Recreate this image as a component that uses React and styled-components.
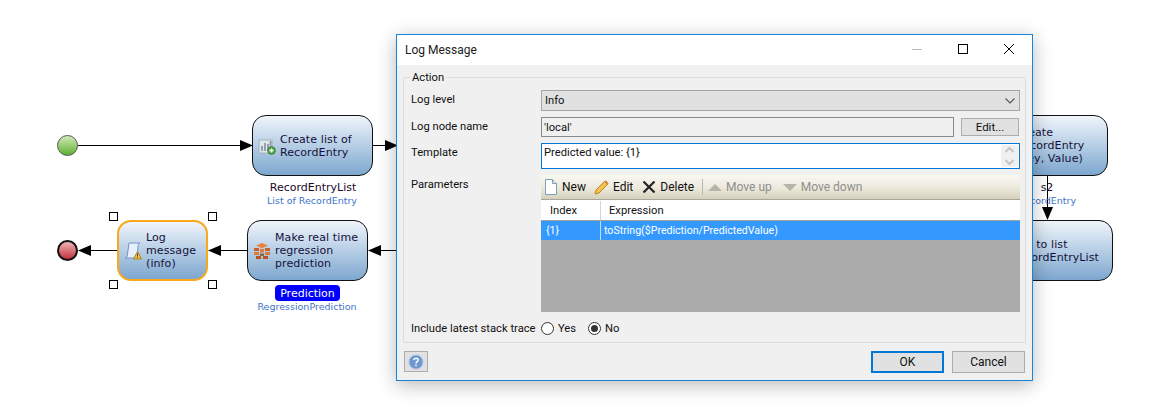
import styled, { createGlobalStyle } from "styled-components";

const Global = createGlobalStyle`
  html, body { margin: 0; padding: 0; background: #fff; }
  body { font-family: Roboto, "Liberation Sans", sans-serif; }
`;

const Canvas = styled.div`
  position: relative; width: 1168px; height: 411px; overflow: hidden; background: #fff;
`;
const Wires = styled.svg`position: absolute; left: 0; top: 0;`;

const Activity = styled.div`
  position: absolute; left: ${({ $x }) => $x}px; top: ${({ $y }) => $y}px;
  box-sizing: border-box; width: ${({ $w }) => $w || 121}px; height: 61px;
  display: flex; align-items: center; padding-left: 5px;
  border: ${({ $selected }) => ($selected ? "2px solid #f9a81a" : "1px solid #111")};
  border-radius: 14px;
  background: linear-gradient(#f0f5fb, #7da7cf);
  font: 11px/13px "DejaVu Sans", sans-serif; color: #14103a;
`;
const ActivityIcon = styled.svg`flex: none; width: 18px; height: 18px; margin-right: 4px;`;
const ActivityText = styled.div`white-space: pre; letter-spacing: 0.1px;`;

const Handle = styled.div`
  position: absolute; left: ${({ $x }) => $x}px; top: ${({ $y }) => $y}px;
  box-sizing: border-box; width: 9px; height: 9px; background: #fff; border: 1px solid #000;
`;
const Dot = styled.div`
  position: absolute; left: 57px; top: ${({ $y }) => $y}px; box-sizing: border-box;
  width: 21px; height: 21px; border-radius: 50%;
  border: ${({ $end }) => ($end ? "2px solid #111" : "1px solid #555")};
  background: ${({ $end }) => ($end
    ? "linear-gradient(#eeb5b8, #c2303c)"
    : "linear-gradient(#d0ebb8, #5fb030)")};
`;
const Caption = styled.div`
  position: absolute; left: ${({ $x }) => $x - 80}px; top: ${({ $y }) => $y}px; width: 160px;
  text-align: center; white-space: nowrap;
  font: ${({ $type }) => ($type ? "9.5px/12px" : "11px/13px")} "DejaVu Sans", sans-serif;
  color: ${({ $type }) => ($type ? "#3f74c8" : "#1a0a2a")};
`;
const VarBadge = styled.div`
  position: absolute; left: 275px; top: 285px; width: 65px; height: 16px;
  display: flex; align-items: center; justify-content: center; border-radius: 4px;
  background: #0000ff; color: #fff; font: 11px "DejaVu Sans", sans-serif;
`;

const Dialog = styled.div`
  position: absolute; left: 396px; top: 34px; width: 637px; height: 347px; box-sizing: border-box;
  display: flex; flex-direction: column;
  border: 1px solid #1883d7; background: #f0f0f0;
  box-shadow: 0 4px 18px rgba(0, 0, 0, 0.28);
  font-size: 11.2px; color: #111;
`;
const TitleBar = styled.div`
  flex: none; height: 30px; display: flex; align-items: center; justify-content: space-between;
  padding-left: 8px; background: #fff; font-size: 12px; color: #222;
`;
const WinButtons = styled.div`display: flex; align-items: center; height: 100%;`;
const WinButton = styled.svg`display: block; width: 46px; height: 30px;`;

const Group = styled.div`
  position: relative; flex: 1; margin: 12px 6px 0; padding: 12px 5px 0 7px;
  display: grid; grid-template-columns: 130px 1fr; grid-auto-rows: min-content; row-gap: 6px;
  border: 1px solid #dcdcdc; border-radius: 1px;
`;
const Legend = styled.div`
  position: absolute; left: 6px; top: -8px; padding: 0 2px; background: #f0f0f0; line-height: 15px;
`;
const Label = styled.div`line-height: 20px; height: 20px;`;
const Select = styled.div`
  height: 21px; box-sizing: border-box; display: flex; align-items: center; justify-content: space-between;
  padding: 0 3px; background: #e1e1e1; border: 1px solid #a6a6a6;
`;
const NodeRow = styled.div`display: flex; justify-content: space-between; align-items: center;`;
const TextField = styled.div`
  box-sizing: border-box; width: 413px; height: 20px; display: flex; align-items: center; padding: 0 2px;
  background: #f0f0f0; border: 1px solid; border-color: #7a7a7a #fff #fff #7a7a7a;
  outline: 1px solid #8a8a8a; outline-offset: -1px;
`;
const Button = styled.div`
  box-sizing: border-box; width: ${({ $w }) => $w}px; height: ${({ $h }) => $h || 22}px;
  display: flex; align-items: center; justify-content: center; background: #e1e1e1;
  border: ${({ $primary }) => ($primary ? "2px solid #0078d7" : "1px solid #adadad")};
  font-size: ${({ $small }) => ($small ? "11.5px" : "12px")};
  margin-right: ${({ $small }) => ($small ? "1px" : "0")};
`;
const TemplateField = styled.div`
  height: 26px; box-sizing: border-box; display: flex; justify-content: space-between;
  padding-left: 2px; line-height: 17px; background: #fff; border: 1px solid #0078d7;
`;
const ScrollBar = styled.div`
  width: 17px; display: flex; flex-direction: column; justify-content: space-between; align-items: center;
  background: #f0f0f0; border: 1px solid #fff;
`;
const ParamLabel = styled.div`line-height: 20px;`;
const ParamPanel = styled.div`display: flex; flex-direction: column; height: 137px;`;
const Toolbar = styled.div`
  flex: none; height: 25px; box-sizing: border-box; display: flex; align-items: center; padding-left: 2px;
  border-radius: 3px 3px 0 0; border-bottom: 1px solid #a8a69a;
  background: linear-gradient(#f8f8f2, #ece9dc 55%, #d5d1bd);
`;
const ToolItem = styled.div`
  display: flex; align-items: center; gap: 3px; margin-right: ${({ $gap }) => $gap ?? 8}px;
  font-size: 12px; color: ${({ $disabled }) => ($disabled ? "#8e8e8e" : "#111")};
`;
const ToolIcon = styled.svg`display: block; width: 16px; height: 16px; flex: none;`;
const ToolSep = styled.div`width: 1px; height: 16px; background: #bdbaa9; margin: 0 4px 0 0;`;
const Table = styled.div`flex: 1; background: #ababab; display: flex; flex-direction: column;`;
const TableRow = styled.div`
  height: ${({ $head }) => ($head ? 21 : 19)}px; flex: none; display: grid; grid-template-columns: 60px 1fr;
  background: ${({ $head }) => ($head ? "#fff" : "#3399ff")};
  color: ${({ $head }) => ($head ? "#111" : "#fff")};
  font-size: ${({ $head }) => ($head ? "11.2px" : "10.6px")};
  padding-top: ${({ $head }) => ($head ? "1px" : "0")};
  border-bottom: ${({ $head }) => ($head ? "1px solid #a0a0a0" : "none")};
  box-sizing: ${({ $head }) => ($head ? "border-box" : "content-box")};
`;
const Cell = styled.div`
  display: flex; align-items: center; padding-left: ${({ $pad }) => $pad}px;
  border-right: ${({ $last }) => ($last ? "none" : "1px solid #c8d8e8")};
`;
const RadioRow = styled.div`
  grid-column: 1 / -1; display: flex; align-items: center; height: 17px; margin-top: 2px;
`;
const RadioLabel = styled.div`width: 130px; flex: none; white-space: nowrap;`;
const RadioItem = styled.div`display: flex; align-items: center; gap: 4px; margin-right: 12px;`;
const RadioMark = styled.div`
  box-sizing: border-box; width: 13px; height: 13px; border-radius: 50%;
  border: 1px solid #333; background: #fff; display: flex; align-items: center; justify-content: center;
  &::after {
    content: ""; width: 7px; height: 7px; border-radius: 50%;
    background: ${({ $on }) => ($on ? "#333" : "transparent")};
  }
`;
const Footer = styled.div`
  flex: none; height: 37px; box-sizing: border-box; padding: 8px 7px 0; display: flex; justify-content: space-between;
`;
const FooterRight = styled.div`display: flex; gap: 8px;`;

const arrow = (x, y, dir) => {
  const l = 13, h = 5.5;
  if (dir === "right") return `${x},${y} ${x - l},${y - h} ${x - l},${y + h}`;
  if (dir === "left") return `${x},${y} ${x + l},${y - h} ${x + l},${y + h}`;
  return `${x},${y} ${x - h},${y - l} ${x + h},${y - l}`;
};

const CreateListIcon = () => (
  <ActivityIcon viewBox="0 0 18 18">
    <rect x="1" y="3" width="13" height="13" fill="#dfe6ec" stroke="#a3b0bc" />
    <path d="M4 14V9M7 14V6M10 14V7M12.5 14V4" stroke="#8d9aa6" strokeWidth="1.8" />
    <circle cx="13.5" cy="13.5" r="3.8" fill="#55a846" stroke="#2f7f35" />
    <path d="M11.5 13.5h4M13.5 11.5v4" stroke="#fff" strokeWidth="1.3" />
  </ActivityIcon>
);
const LogIcon = () => (
  <ActivityIcon viewBox="0 0 18 18">
    <path d="M5 1h11c-1.5 1-2 2-2 4l-1 11H1.5c1.5-.5 2-2 2-4z" fill="#e6effa" stroke="#6f94cc" />
    <path d="M9.5 17l4-7.5 4 7.5z" fill="#f0c040" stroke="#a98320" />
    <path d="M13.5 11.5v3M13.5 15.2v.9" stroke="#553" strokeWidth="1" />
  </ActivityIcon>
);
const PredictIcon = () => (
  <ActivityIcon viewBox="0 0 18 18">
    <path d="M9 1l6 2.6L9 6.2 3 3.6z" fill="#e8843a" />
    <path d="M1 6h5v3H1zM12 6h5v3h-5z" fill="#c9602a" />
    <path d="M7 7h4v3.5H7z" fill="#dd7a3c" />
    <path d="M1 10h5v3H1zM12 10h5v3h-5z" fill="#e07a35" />
    <path d="M3 14h5v3H3zM10 14h5v3h-5z" fill="#b9541f" />
    <path d="M7 11.5h4V14H7z" fill="#7f6a55" />
  </ActivityIcon>
);

export default function App() {
  return (
    <Canvas>
      <Global />
      <Wires width="1168" height="411">
        <g stroke="#000" strokeWidth="1">
          <line x1="78" y1="145.5" x2="240" y2="145.5" />
          <line x1="373" y1="145.5" x2="396" y2="145.5" />
          <line x1="90" y1="250.5" x2="117" y2="250.5" />
          <line x1="220" y1="250.5" x2="247" y2="250.5" />
          <line x1="381" y1="250.5" x2="396" y2="250.5" />
          <line x1="1047.5" y1="175" x2="1047.5" y2="208" />
        </g>
        <polygon points={arrow(253, 145.5, "right")} />
        <polygon points={arrow(398, 145.5, "right")} />
        <polygon points={arrow(78, 250.5, "left")} />
        <polygon points={arrow(208, 250.5, "left")} />
        <polygon points={arrow(368, 250.5, "left")} />
        <polygon points={arrow(1047.5, 220, "down")} />
      </Wires>

      <Dot $y={135} />
      <Dot $y={240} $end />

      <Activity $x={252} $y={115}>
        <CreateListIcon />
        <ActivityText>{"Create list of\nRecordEntry"}</ActivityText>
      </Activity>
      <Caption $x={313} $y={181}>RecordEntryList</Caption>
      <Caption $x={312} $y={195} $type>List of RecordEntry</Caption>

      <Activity $x={117} $y={220} $w={91} $selected>
        <LogIcon />
        <ActivityText>{"Log\nmessage\n(info)"}</ActivityText>
      </Activity>
      <Handle $x={109} $y={212} />
      <Handle $x={208} $y={212} />
      <Handle $x={109} $y={280} />
      <Handle $x={208} $y={280} />

      <Activity $x={247} $y={220}>
        <PredictIcon />
        <ActivityText>{"Make real time\nregression\nprediction"}</ActivityText>
      </Activity>
      <VarBadge>Prediction</VarBadge>
      <Caption $x={307} $y={301} $type>RegressionPrediction</Caption>

      <Activity $x={988} $y={115} $w={120}>
        <ActivityIcon />
        <ActivityText>{"Create\nRecordEntry\n(Key, Value)"}</ActivityText>
      </Activity>
      <Caption $x={1047} $y={181}>s2</Caption>
      <Caption $x={1047} $y={195} $type>RecordEntry</Caption>
      <Activity $x={983} $y={220} $w={130}>
        <ActivityIcon />
        <ActivityText>{"Add to list\nRecordEntryList"}</ActivityText>
      </Activity>

      <Dialog>
        <TitleBar>
          Log Message
          <WinButtons>
            <WinButton viewBox="0 0 46 30"><path d="M18 14.5h10" stroke="#bbb" /></WinButton>
            <WinButton viewBox="0 0 46 30"><rect x="18.5" y="9.5" width="9" height="9" fill="none" stroke="#000" /></WinButton>
            <WinButton viewBox="0 0 46 30"><path d="M18 9l10 10M28 9L18 19" stroke="#000" fill="none" /></WinButton>
          </WinButtons>
        </TitleBar>

        <Group>
          <Legend>Action</Legend>
          <Label>Log level</Label>
          <Select>
            Info
            <svg width="12" height="8" viewBox="0 0 12 8"><path d="M1.5 1.5L6 6l4.5-4.5" fill="none" stroke="#555" strokeWidth="1.2" /></svg>
          </Select>
          <Label>Log node name</Label>
          <NodeRow>
            <TextField>'local'</TextField>
            <Button $w={58} $h={18} $small>Edit...</Button>
          </NodeRow>
          <Label>Template</Label>
          <TemplateField>
            Predicted value: {"{1}"}
            <ScrollBar>
              <svg width="11" height="10" viewBox="0 0 11 10"><path d="M1.5 7L5.5 3l4 4" fill="none" stroke="#c4c4c4" strokeWidth="2" /></svg>
              <svg width="11" height="10" viewBox="0 0 11 10"><path d="M1.5 3l4 4 4-4" fill="none" stroke="#c4c4c4" strokeWidth="2" /></svg>
            </ScrollBar>
          </TemplateField>
          <ParamLabel>Parameters</ParamLabel>
          <ParamPanel>
            <Toolbar>
              <ToolItem>
                <ToolIcon viewBox="0 0 16 16">
                  <path d="M2.5.5h7l4 4v11h-11z" fill="#fff" stroke="#7f9db9" />
                  <path d="M9.5.5v4h4" fill="#dce6f2" stroke="#7f9db9" />
                </ToolIcon>
                New
              </ToolItem>
              <ToolItem>
                <ToolIcon viewBox="0 0 16 16">
                  <path d="M2 11L11 2l3 3-9 9-4 1z" fill="#f4c24a" stroke="#b9862a" />
                  <path d="M11 2l3 3" stroke="#d9804a" strokeWidth="2" />
                </ToolIcon>
                Edit
              </ToolItem>
              <ToolItem>
                <ToolIcon viewBox="0 0 16 16">
                  <path d="M2.5 2.5l11 11M13.5 2.5l-11 11" stroke="#222" strokeWidth="2.2" />
                </ToolIcon>
                Delete
              </ToolItem>
              <ToolSep />
              <ToolItem $disabled $gap={10}>
                <ToolIcon viewBox="0 0 16 16"><path d="M1 12L8 5l7 7z" fill="#b4b4a8" /></ToolIcon>
                Move up
              </ToolItem>
              <ToolItem $disabled>
                <ToolIcon viewBox="0 0 16 16"><path d="M1 5h14l-7 7z" fill="#b4b4a8" /></ToolIcon>
                Move down
              </ToolItem>
            </Toolbar>
            <Table>
              <TableRow $head>
                <Cell $pad={9}>Index</Cell>
                <Cell $pad={8} $last>Expression</Cell>
              </TableRow>
              <TableRow>
                <Cell $pad={5}>{"{1}"}</Cell>
                <Cell $pad={3} $last>toString($Prediction/PredictedValue)</Cell>
              </TableRow>
            </Table>
          </ParamPanel>
          <RadioRow>
            <RadioLabel>Include latest stack trace</RadioLabel>
            <RadioItem><RadioMark />Yes</RadioItem>
            <RadioItem><RadioMark $on />No</RadioItem>
          </RadioRow>
        </Group>

        <Footer>
          <Button $w={24} $h={21}>
            <svg width="16" height="16" viewBox="0 0 16 16">
              <circle cx="8" cy="8" r="7" fill="#6f97cf" stroke="#a9c2e4" />
              <path d="M5.8 6.2C6 4.8 7 4.3 8 4.3c1.3 0 2.2.8 2.2 1.8 0 1.5-2.2 1.6-2.2 3.3M8 10.8v1.4" fill="none" stroke="#fff" strokeWidth="1.5" />
            </svg>
          </Button>
          <FooterRight>
            <Button $w={73} $primary>OK</Button>
            <Button $w={73}>Cancel</Button>
          </FooterRight>
        </Footer>
      </Dialog>
    </Canvas>
  );
}
